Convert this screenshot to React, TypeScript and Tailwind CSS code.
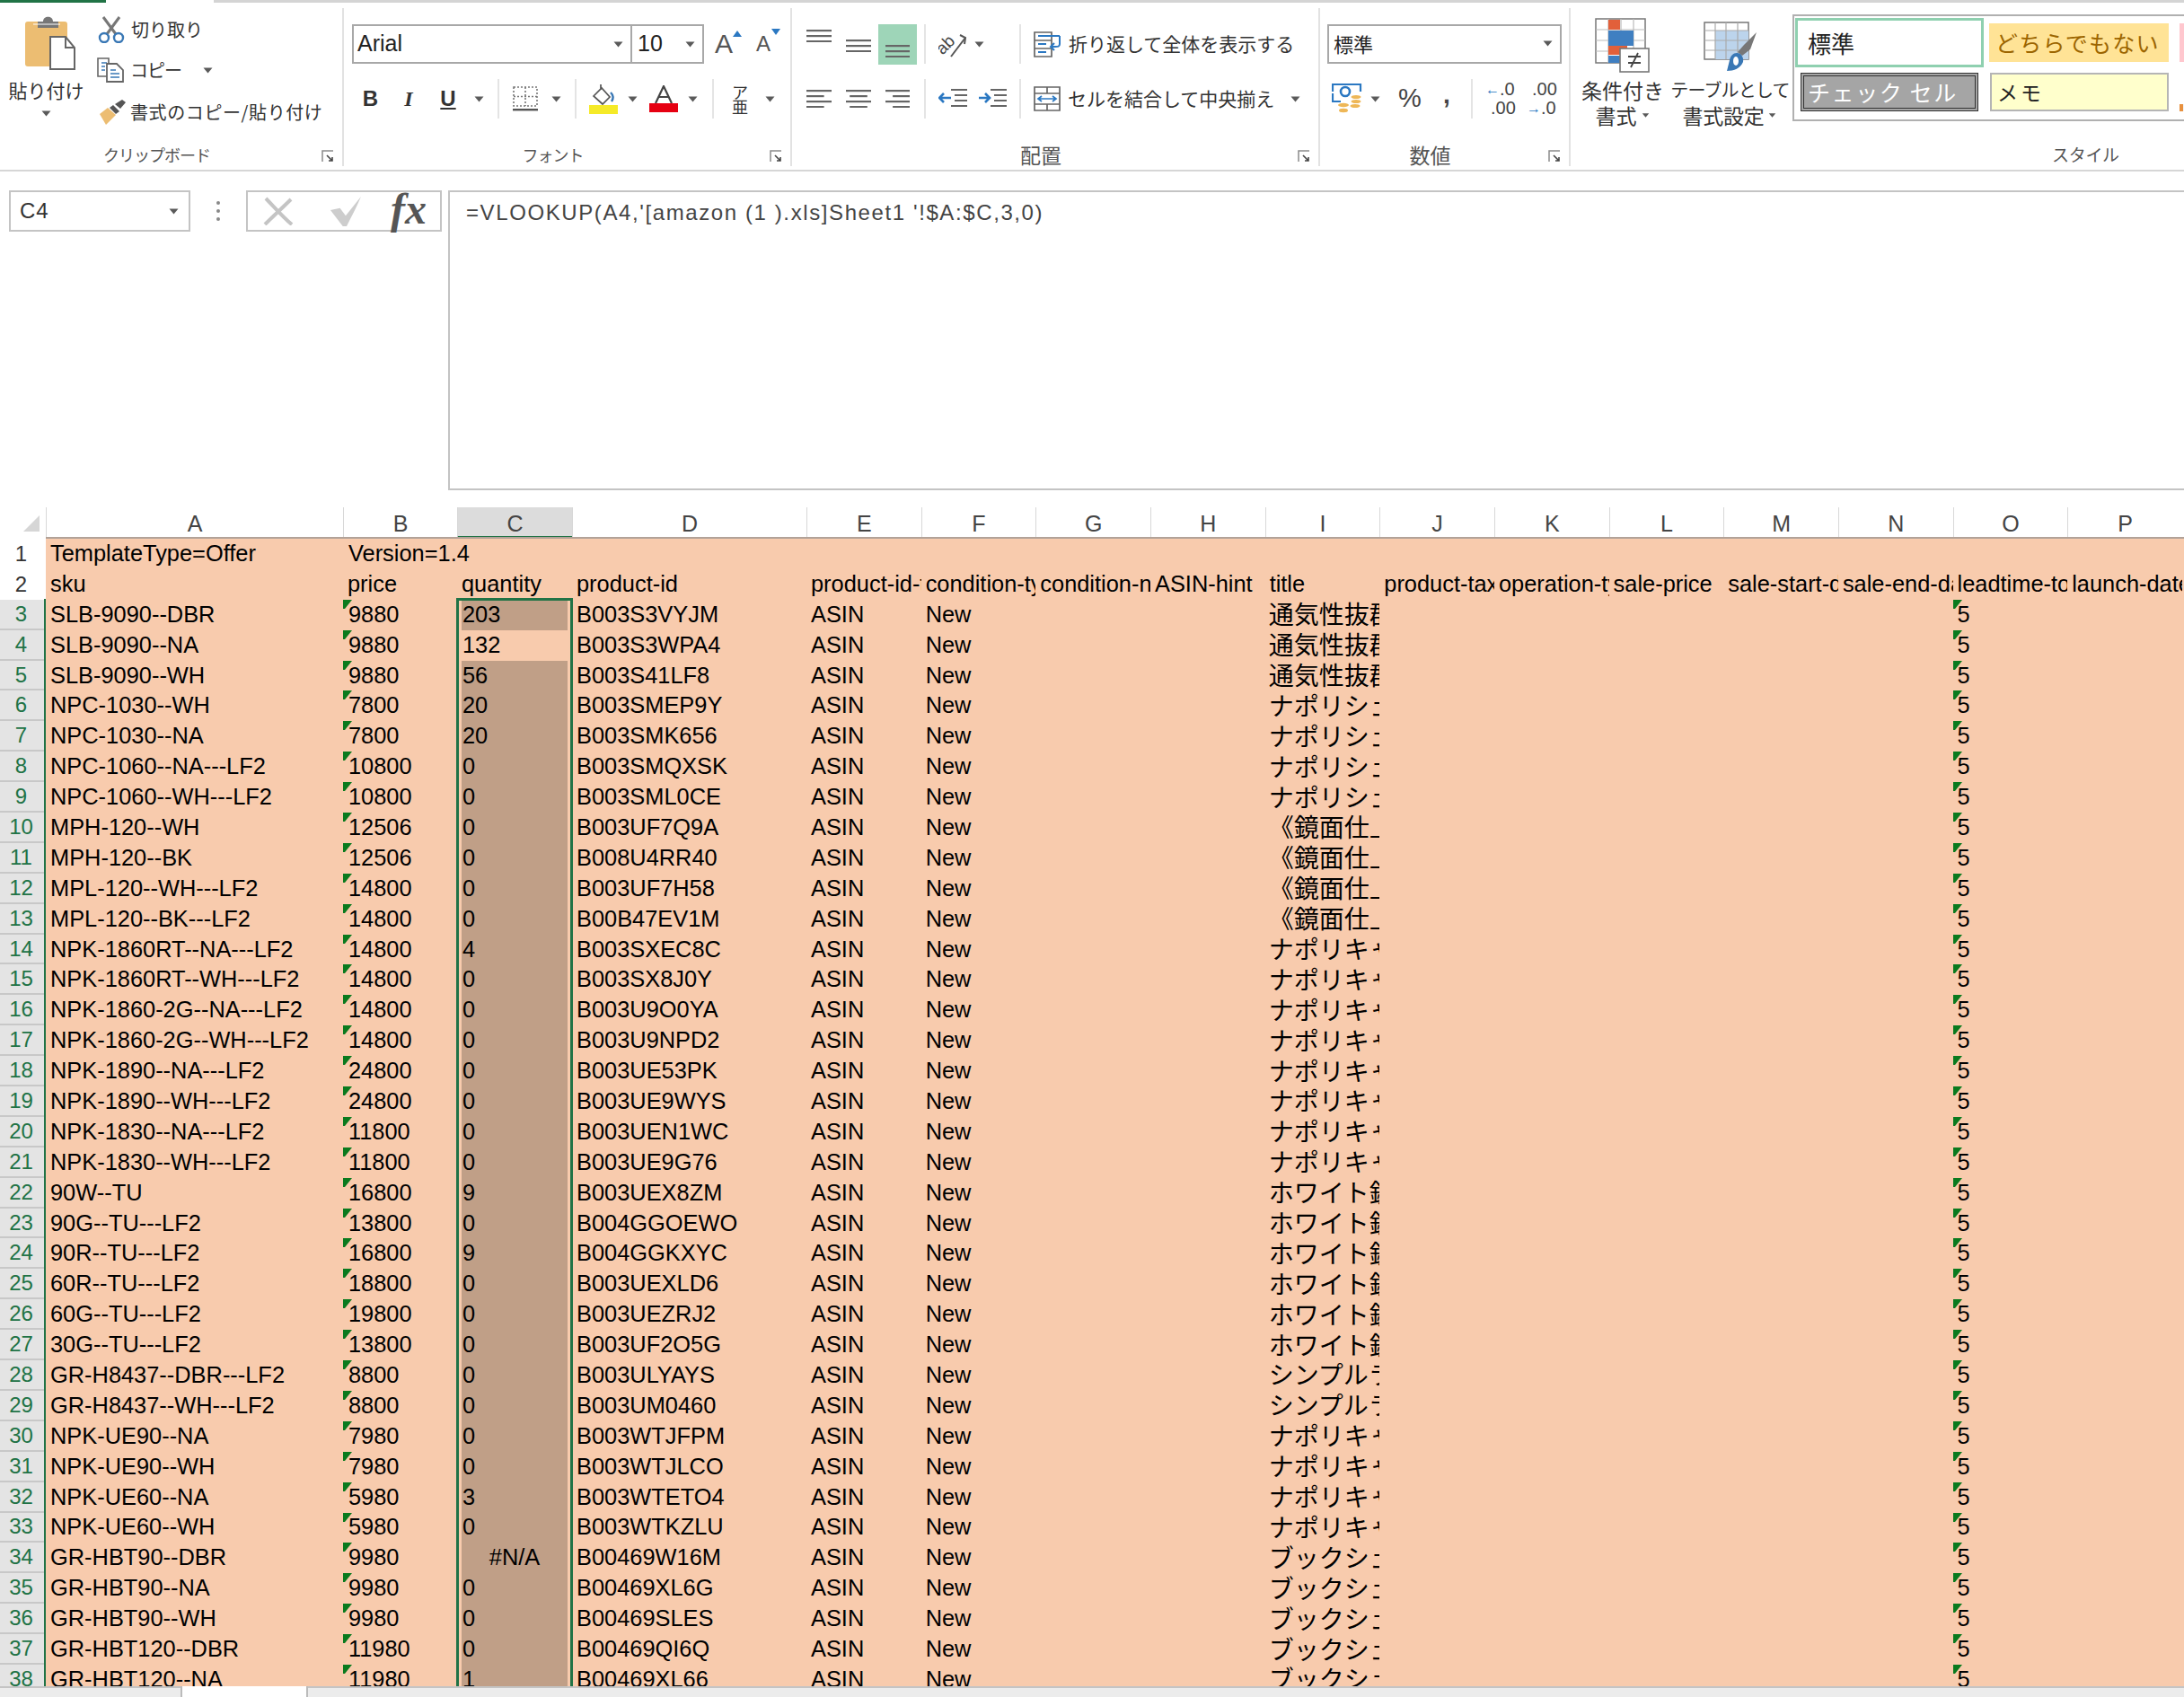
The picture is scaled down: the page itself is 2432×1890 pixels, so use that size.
import React from "react";

const COLS = ["A","B","C","D","E","F","G","H","I","J","K","L","M","N","O","P"];
const TEMPLATE = "grid grid-cols-[51px_331px_127px_128px_261px_repeat(12,127.67px)_1fr]";
const HEAD = ["sku","price","quantity","product-id","product-id-type","condition-type","condition-note","ASIN-hint","title","product-tax-code","operation-type","sale-price","sale-start-date","sale-end-date","leadtime-to-ship","launch-date"];
const T1 = "通気性抜群シート", T2 = "ナポリシェルフ", T3 = "《鏡面仕上げ", T4 = "ナポリキャビネット", T5 = "ホワイト鏡面", T6 = "シンプルラック", T7 = "ブックシェルフ";
const ROWS: [number,string,string,string,string,string][] = [
[3,"SLB-9090--DBR","9880","203","B003S3VYJM",T1],[4,"SLB-9090--NA","9880","132","B003S3WPA4",T1],[5,"SLB-9090--WH","9880","56","B003S41LF8",T1],
[6,"NPC-1030--WH","7800","20","B003SMEP9Y",T2],[7,"NPC-1030--NA","7800","20","B003SMK656",T2],[8,"NPC-1060--NA---LF2","10800","0","B003SMQXSK",T2],
[9,"NPC-1060--WH---LF2","10800","0","B003SML0CE",T2],[10,"MPH-120--WH","12506","0","B003UF7Q9A",T3],[11,"MPH-120--BK","12506","0","B008U4RR40",T3],
[12,"MPL-120--WH---LF2","14800","0","B003UF7H58",T3],[13,"MPL-120--BK---LF2","14800","0","B00B47EV1M",T3],[14,"NPK-1860RT--NA---LF2","14800","4","B003SXEC8C",T4],
[15,"NPK-1860RT--WH---LF2","14800","0","B003SX8J0Y",T4],[16,"NPK-1860-2G--NA---LF2","14800","0","B003U9O0YA",T4],[17,"NPK-1860-2G--WH---LF2","14800","0","B003U9NPD2",T4],
[18,"NPK-1890--NA---LF2","24800","0","B003UE53PK",T4],[19,"NPK-1890--WH---LF2","24800","0","B003UE9WYS",T4],[20,"NPK-1830--NA---LF2","11800","0","B003UEN1WC",T4],
[21,"NPK-1830--WH---LF2","11800","0","B003UE9G76",T4],[22,"90W--TU","16800","9","B003UEX8ZM",T5],[23,"90G--TU---LF2","13800","0","B004GGOEWO",T5],
[24,"90R--TU---LF2","16800","9","B004GGKXYC",T5],[25,"60R--TU---LF2","18800","0","B003UEXLD6",T5],[26,"60G--TU---LF2","19800","0","B003UEZRJ2",T5],
[27,"30G--TU---LF2","13800","0","B003UF2O5G",T5],[28,"GR-H8437--DBR---LF2","8800","0","B003ULYAYS",T6],[29,"GR-H8437--WH---LF2","8800","0","B003UM0460",T6],
[30,"NPK-UE90--NA","7980","0","B003WTJFPM",T4],[31,"NPK-UE90--WH","7980","0","B003WTJLCO",T4],[32,"NPK-UE60--NA","5980","3","B003WTETO4",T4],
[33,"NPK-UE60--WH","5980","0","B003WTKZLU",T4],[34,"GR-HBT90--DBR","9980","#N/A","B00469W16M",T7],[35,"GR-HBT90--NA","9980","0","B00469XL6G",T7],
[36,"GR-HBT90--WH","9980","0","B00469SLES",T7],[37,"GR-HBT120--DBR","11980","0","B00469QI6Q",T7],[38,"GR-HBT120--NA","11980","1","B00469XL66",T7],
];

const CJK = "font-['Noto_Sans_CJK_JP','Noto_Sans',sans-serif]";
const Caret = ({ className = "" }: { className?: string }) => (
  <svg width="11" height="7" viewBox="0 0 11 7" className={`shrink-0 ${className}`}><path d="M0.5 0.5h10L5.5 6.5z" fill="#5a5a5a" /></svg>
);
const Sep = ({ className = "" }: { className?: string }) => <div className={`w-[2px] h-[44px] bg-[#e4e4e4] shrink-0 ${className}`} />;
const GroupSep = () => <div className="w-[2px] h-[176px] mt-[6px] bg-[#e2e2e2] shrink-0" />;
const Launcher = () => (
  <svg width="14" height="14" viewBox="0 0 14 14" className="absolute right-[9px] top-[8px]">
    <path d="M1 13V1h12" fill="none" stroke="#8a8a8a" strokeWidth="1.5" /><path d="M6 6l6 6M12 8v4H8" fill="none" stroke="#444" strokeWidth="1.6" />
  </svg>
);
const GroupLabel = ({ children, className = "" }: { children: string; className?: string }) => (
  <div className={`relative h-[30px] leading-[26px] text-[#555] text-center pr-[32px] ${CJK} ${className}`}>
    {children}<Launcher />
  </div>
);
const Lines = ({ w = 28, kind }: { w?: number; kind: "t" | "m" | "b" | "l" | "c" | "r" }) => {
  const h = ["l", "c", "r"].includes(kind);
  const rows = h ? [1, 7, 13, 19] : [1, 7, 13];
  const len = (i: number) => (h && i % 2 === 1 ? 0.7 : 1);
  return (
    <svg width={w} height={h ? 20 : 14} viewBox={`0 0 ${w} ${h ? 20 : 14}`} className="shrink-0">
      {rows.map((y, i) => {
        const l = w * len(i);
        const x = kind === "c" ? (w - l) / 2 : kind === "r" ? w - l : 0;
        return <rect key={y} x={x} y={y - 1} width={l} height="2.2" fill="#666" />;
      })}
    </svg>
  );
};

const PasteIcon = () => (
  <svg width="58" height="60" viewBox="0 0 58 60" className="shrink-0">
    <rect x="1" y="6" width="47" height="50" rx="3" fill="#ecbd72" />
    <path d="M15 6h6c0-7 11-7 11 0h6v7H15z" fill="#777" />
    <rect x="10" y="8" width="30" height="2" fill="#fff" opacity=".5" />
    <path d="M29 23h17l10 12v24H29z" fill="#fff" stroke="#666" strokeWidth="2" />
    <path d="M46 23v12h10" fill="none" stroke="#666" strokeWidth="2" />
  </svg>
);
const ScissorsIcon = () => (
  <svg width="30" height="30" viewBox="0 0 30 30" className="shrink-0">
    <path d="M6 1l14 19M24 1L10 20" stroke="#777" strokeWidth="3" fill="none" />
    <circle cx="7" cy="24" r="5" fill="none" stroke="#3a78b5" strokeWidth="2.4" />
    <circle cx="23" cy="24" r="5" fill="none" stroke="#3a78b5" strokeWidth="2.4" />
  </svg>
);
const CopyIcon = () => (
  <svg width="30" height="28" viewBox="0 0 30 28" className="shrink-0">
    <path d="M1 1h12v20H1z" fill="#fff" stroke="#666" strokeWidth="1.6" />
    <path d="M5 6h6M5 10h4M5 14h4" stroke="#3a78b5" strokeWidth="1.6" />
    <path d="M11 7h11l7 7v13H11z" fill="#fff" stroke="#666" strokeWidth="1.8" />
    <path d="M15 14h6M15 18h10M15 22h10" stroke="#3a78b5" strokeWidth="1.6" />
  </svg>
);
const BrushIcon = () => (
  <svg width="32" height="28" viewBox="0 0 32 28" className="shrink-0">
    <path d="M2 16l9-7 9 8-11 11z" fill="#ecbd72" />
    <path d="M13 9l7 7 4-3-7-7z" fill="#555" />
    <path d="M19 5l6 5 6-7-4-3z" fill="#555" />
  </svg>
);
const BorderIcon = () => (
  <svg width="28" height="28" viewBox="0 0 28 28" className="shrink-0">
    <path d="M1 1h26v21H1zM14 1v21M1 11.5h26" fill="none" stroke="#777" strokeWidth="1.6" strokeDasharray="2 2" />
    <rect x="0" y="25" width="28" height="2.4" fill="#555" />
  </svg>
);
const FillIcon = () => (
  <svg width="32" height="34" viewBox="0 0 32 34" className="shrink-0">
    <path d="M13 1v6M5 14l9-9 9 10-8 8z" fill="none" stroke="#555" strokeWidth="1.7" />
    <path d="M24 10c3 3 3 7 1 10" fill="none" stroke="#3a78b5" strokeWidth="2.4" />
    <rect x="0" y="24" width="32" height="10" fill="#f5ea28" />
  </svg>
);
const FontColorIcon = () => (
  <svg width="32" height="30" viewBox="0 0 32 30" className="shrink-0">
    <path d="M7 20L16 1l9 19M10.5 13h11" fill="none" stroke="#444" strokeWidth="2.2" />
    <rect x="0" y="20" width="32" height="10" fill="#e60012" />
  </svg>
);
const OrientIcon = () => (
  <svg width="32" height="30" viewBox="0 0 32 30" className="shrink-0">
    <text x="0" y="23" transform="rotate(-45 8 20)" fontFamily="Liberation Sans" fontSize="19" fill="#444">ab</text>
    <path d="M30 8L14 29" fill="none" stroke="#555" strokeWidth="2" />
    <path d="M24 5l6 3-1 7" fill="none" stroke="#555" strokeWidth="2" />
  </svg>
);
const IndentIcon = ({ inc }: { inc?: boolean }) => (
  <svg width="32" height="24" viewBox="0 0 32 24" className="shrink-0">
    <path d="M14 2h18M18 8h14M18 14h14M14 20h18" stroke="#666" strokeWidth="2.2" />
    {inc ? <path d="M1 11h12M8 6l5 5-5 5" fill="none" stroke="#2b78c2" strokeWidth="2.6" /> : <path d="M14 11H1M6 6l-5 5 5 5" fill="none" stroke="#2b78c2" strokeWidth="2.6" />}
  </svg>
);
const WrapIcon = () => (
  <svg width="32" height="29" viewBox="0 0 32 29" className="shrink-0">
    <path d="M1 1h19v27H1zM1 10h19M1 19h19" fill="#fff" stroke="#666" strokeWidth="1.7" />
    <path d="M5 5h24M5 14h9M5 23h9" stroke="#2b78c2" strokeWidth="2" />
    <path d="M29 5v9c0 3-2 3-5 3h-4M23 13l-4 4 4 4" fill="none" stroke="#2b78c2" strokeWidth="2" />
  </svg>
);
const MergeIcon = () => (
  <svg width="30" height="28" viewBox="0 0 30 28" className="shrink-0">
    <path d="M1 1h28v26H1zM1 8h28M1 20h28M15 1v7M15 20v7" fill="#fff" stroke="#666" strokeWidth="1.7" />
    <path d="M5 14h20M9 11l-4 3 4 3M21 11l4 3-4 3" fill="none" stroke="#2b78c2" strokeWidth="1.7" />
  </svg>
);
const MoneyIcon = () => (
  <svg width="34" height="34" viewBox="0 0 34 34" className="shrink-0">
    <path d="M1 9V1h31v8M1 11v9h9" fill="none" stroke="#2b78c2" strokeWidth="2.2" />
    <circle cx="15" cy="9" r="5" fill="none" stroke="#2b78c2" strokeWidth="2.6" />
    <ellipse cx="27" cy="15" rx="5.5" ry="2" fill="#eeb757" /><ellipse cx="27" cy="20" rx="5.5" ry="2" fill="#eeb757" />
    <ellipse cx="26" cy="25" rx="5.5" ry="2" fill="#eeb757" />
    <ellipse cx="13" cy="24" rx="6" ry="2.2" fill="#eeb757" /><ellipse cx="13" cy="30" rx="5" ry="2.2" fill="#eeb757" />
  </svg>
);
const CondIcon = () => (
  <svg width="62" height="62" viewBox="0 0 62 62" className="shrink-0">
    <rect x="1" y="1" width="55" height="49" fill="#fff" stroke="#777" strokeWidth="1.5" />
    <path d="M15 1v49M29 1v49M43 1v49M1 13h55M1 25h55M1 37h55" stroke="#bbb" strokeWidth="1.2" />
    <rect x="15" y="2" width="13" height="11" fill="#e2603a" />
    <rect x="15" y="14" width="28" height="17" fill="#3f7fc1" />
    <rect x="15" y="31" width="21" height="10" fill="#e2603a" />
    <rect x="15" y="42" width="13" height="8" fill="#3f7fc1" />
    <rect x="28" y="34" width="32" height="26" fill="#fff" stroke="#777" strokeWidth="1.6" />
    <path d="M37 43h14M37 50h14M40 55l8-16" stroke="#444" strokeWidth="1.8" fill="none" />
  </svg>
);
const TableIcon = () => (
  <svg width="60" height="58" viewBox="0 0 60 58" className="shrink-0">
    <rect x="1" y="1" width="49" height="41" fill="#fff" stroke="#777" strokeWidth="1.5" />
    <rect x="13" y="10" width="37" height="32" fill="#bcd4ec" />
    <path d="M13 1v41M25 1v41M38 1v41M1 10h49M1 21h49M1 32h49" stroke="#aaa" strokeWidth="1.2" />
    <path d="M59 12L45 26l-7 8 5 4 9-7z" fill="#777" />
    <path d="M37 35c-4 0-7 3-8 8l-3 12c8 0 15-3 18-10 1-5-2-10-7-10z" fill="#3a78b5" />
    <ellipse cx="36" cy="44" rx="3" ry="5" fill="#fff" />
  </svg>
);
const CrossIcon = () => (
  <svg width="34" height="32" viewBox="0 0 34 32" className="shrink-0"><path d="M3 2c8 8 20 22 29 29M31 3C22 12 12 21 2 31" fill="none" stroke="#c4c4c4" strokeWidth="4" /></svg>
);
const CheckIcon = () => (
  <svg width="40" height="34" viewBox="0 0 36 32" className="shrink-0"><path d="M1 15l10-2 6 8L33 1c-5 12-10 21-15 31h-4z" fill="#cdcdcd" /></svg>
);

function Ribbon() {
  return (
    <div className="flex h-[188px] border-b-[2px] border-[#d6d6d6] box-border">
      {/* clipboard */}
      <div className="w-[381px] shrink-0 flex flex-col">
        <div className="h-[156px] flex">
          <div className="w-[105px] flex flex-col items-center pt-[15px] pr-[2px]">
            <div className="pl-[8px]"><PasteIcon /></div>
            <div className={`text-[21px] leading-[24px] text-[#333] mt-[10px] ${CJK}`}>貼り付け</div>
            <Caret className="mt-[11px]" />
          </div>
          <div className="flex flex-col text-[20px] text-[#333]">
            <div className={`h-[30px] mt-[15px] flex items-center ${CJK}`}><div className="ml-[4px]"><ScissorsIcon /></div><span className="ml-[7px]">切り取り</span></div>
            <div className={`h-[30px] mt-[15px] flex items-center ${CJK}`}><div className="ml-[3px]"><CopyIcon /></div><span className="ml-[7px] tracking-[-1px]">コピー</span><Caret className="ml-[24px]" /></div>
            <div className={`h-[30px] mt-[17px] flex items-center ${CJK}`}><div className="ml-[4px]"><BrushIcon /></div><span className="ml-[4px] tracking-[0.6px]">書式のコピー/貼り付け</span></div>
          </div>
        </div>
        <GroupLabel className="text-[18px] tracking-[-1px]">クリップボード</GroupLabel>
      </div>
      <GroupSep />
      {/* font */}
      <div className="w-[497px] shrink-0 flex flex-col">
        <div className="h-[156px] pl-[9px] pt-[24px]">
          <div className="flex items-center">
            <div className="w-[312px] h-[44px] border-[2px] border-[#a8a8a8] flex items-center justify-between pl-[4px] pr-[8px] text-[25px] text-[#222] font-['Liberation_Sans',sans-serif]">Arial<Caret /></div>
            <div className="w-[80px] h-[44px] border-[2px] border-l-0 border-[#a8a8a8] flex items-center justify-between pl-[6px] pr-[8px] text-[25px] text-[#222] font-['Liberation_Sans',sans-serif]">10<Caret /></div>
            <div className="relative ml-[12px] w-[24px] text-[30px] leading-[30px] text-[#555] font-['Liberation_Sans',sans-serif]">A<svg width="10" height="7" viewBox="0 0 10 7" className="absolute -right-[6px] top-0"><path d="M0 7h10L5 0z" fill="#2b78c2" /></svg></div>
            <div className="relative ml-[22px] w-[20px] text-[24px] leading-[30px] text-[#555] font-['Liberation_Sans',sans-serif]">A<svg width="10" height="7" viewBox="0 0 10 7" className="absolute -right-[7px] -top-[2px]"><path d="M0 0h10L5 7z" fill="#2b78c2" /></svg></div>
          </div>
          <div className="flex items-center h-[44px] mt-[17px] font-['Liberation_Sans',sans-serif] text-[#333]">
            <span className="w-[41px] text-center text-[24px] font-bold">B</span>
            <span className="w-[44px] text-center text-[24px] italic font-['Liberation_Serif',serif] font-bold">I</span>
            <span className="w-[44px] text-center text-[24px] font-bold underline">U</span>
            <span className="w-[24px] flex justify-center"><Caret /></span>
            <span className="w-[20px] flex justify-center"><Sep /></span>
            <span className="w-[40px] flex justify-center"><BorderIcon /></span>
            <span className="w-[28px] flex justify-center"><Caret /></span>
            <span className="w-[16px] flex justify-center"><Sep /></span>
            <span className="w-[46px] flex justify-center"><FillIcon /></span>
            <span className="w-[18px] flex justify-center"><Caret /></span>
            <span className="w-[52px] flex justify-center"><FontColorIcon /></span>
            <span className="w-[12px] flex justify-center"><Caret /></span>
            <span className="w-[34px] flex justify-center"><Sep /></span>
            <span className={`w-[26px] flex flex-col items-center text-[18px] leading-[16px] ${CJK}`}><span>ア</span><span>亜</span></span>
            <span className="w-[40px] flex justify-center"><Caret /></span>
          </div>
        </div>
        <GroupLabel className="text-[18px] tracking-[-1px]">フォント</GroupLabel>
      </div>
      <GroupSep />
      {/* alignment */}
      <div className="w-[586px] shrink-0 flex flex-col">
        <div className="h-[156px] pt-[24px]">
          <div className="flex items-center h-[44px]">
            <div className="ml-[16px] w-[28px] self-start mt-[6px]"><Lines kind="t" /></div>
            <div className="ml-[16px] w-[28px] mt-[4px]"><Lines kind="m" /></div>
            <div className="ml-[8px] w-[43px] h-[45px] bg-[#9ed5b8] flex items-end justify-center pb-[8px]"><Lines w={27} kind="b" /></div>
            <Sep className="ml-[8px]" />
            <div className="ml-[14px]"><OrientIcon /></div>
            <Caret className="ml-[8px]" />
            <Sep className="ml-[39px]" />
            <div className="ml-[14px]"><WrapIcon /></div>
            <span className={`ml-[7px] text-[21px] text-[#333] ${CJK}`}>折り返して全体を表示する</span>
          </div>
          <div className="flex items-center h-[44px] mt-[17px]">
            <div className="ml-[16px]"><Lines kind="l" /></div>
            <div className="ml-[16px]"><Lines kind="c" /></div>
            <div className="ml-[16px]"><Lines w={27} kind="r" /></div>
            <Sep className="ml-[16px]" />
            <div className="ml-[14px]"><IndentIcon /></div>
            <div className="ml-[12px]"><IndentIcon inc /></div>
            <Sep className="ml-[14px]" />
            <div className="ml-[14px]"><MergeIcon /></div>
            <span className={`ml-[8px] text-[21px] text-[#333] ${CJK}`}>セルを結合して中央揃え</span>
            <Caret className="ml-[18px]" />
          </div>
        </div>
        <GroupLabel className="text-[23px]">配置</GroupLabel>
      </div>
      <GroupSep />
      {/* number */}
      <div className="w-[277px] shrink-0 flex flex-col">
        <div className="h-[156px] pt-[24px] pl-[8px]">
          <div className={`w-[261px] h-[44px] border-[2px] border-[#a8a8a8] flex items-center justify-between pl-[5px] pr-[8px] pb-[2px] text-[22px] text-[#222] ${CJK}`}>標準<Caret /></div>
          <div className="flex items-center h-[44px] mt-[17px]">
            <div className="ml-[5px]"><MoneyIcon /></div>
            <Caret className="ml-[9px]" />
            <span className="ml-[16px] w-[34px] text-center text-[29px] text-[#444] font-['Liberation_Sans',sans-serif]">%</span>
            <span className="ml-[12px] w-[24px] text-center text-[28px] font-bold text-[#444] font-['Liberation_Sans',sans-serif] -mt-[8px]">,</span>
            <Sep className="ml-[15px]" />
            <div className="ml-[14px] w-[36px] flex flex-col text-[20px] leading-[21px] text-[#444] font-['Liberation_Sans',sans-serif]">
              <span className="flex items-center"><span className="text-[#2b78c2] font-bold text-[16px]">←</span>.0</span><span className="pl-[6px]">.00</span>
            </div>
            <div className="ml-[10px] w-[36px] flex flex-col text-[20px] leading-[21px] text-[#444] font-['Liberation_Sans',sans-serif]">
              <span className="pl-[6px]">.00</span><span className="flex items-center"><span className="text-[#2b78c2] font-bold text-[16px]">→</span>.0</span>
            </div>
          </div>
        </div>
        <GroupLabel className="text-[23px]">数値</GroupLabel>
      </div>
      <GroupSep />
      {/* styles */}
      <div className="flex-1 min-w-0 flex flex-col overflow-hidden">
        <div className="h-[156px] flex">
          <div className="w-[108px] shrink-0 flex flex-col items-center pt-[17px] pl-[8px]">
            <CondIcon />
            <div className={`text-[23px] leading-[26px] text-[#333] mt-[5px] text-center whitespace-nowrap ${CJK}`}>条件付き</div>
            <div className={`text-[23px] leading-[30px] text-[#333] flex items-center gap-[4px] ${CJK}`}>書式<Caret className="scale-75" /></div>
          </div>
          <div className="w-[139px] shrink-0 flex flex-col items-center pt-[21px]">
            <TableIcon />
            <div className={`text-[20px] leading-[26px] tracking-[-0.8px] whitespace-nowrap text-[#333] mt-[5px] text-center ${CJK}`}>テーブルとして</div>
            <div className={`text-[23px] leading-[30px] tracking-[-0.3px] text-[#333] flex items-center gap-[4px] whitespace-nowrap ${CJK}`}>書式設定<Caret className="scale-75" /></div>
          </div>
          <div className="w-[460px] shrink-0 h-[119px] mt-[13px] border-[2px] border-r-0 border-[#b0b0b0] bg-white pl-[1px] pt-[2px] flex flex-col gap-[6px]">
            <div className="flex items-center gap-[6px]">
              <div className={`w-[210px] h-[55px] border-[3px] border-[#8fd0b0] flex items-center pl-[11px] text-[26px] text-[#222] shrink-0 ${CJK}`}>標準</div>
              <div className={`w-[200px] h-[43px] bg-[#ffe396] flex items-center pl-[7px] text-[25px] tracking-[1.2px] text-[#9c6500] shrink-0 whitespace-nowrap ${CJK}`}>どちらでもない</div>
              <div className="ml-[6px] w-[40px] h-[43px] bg-[#ffc7ce] shrink-0" />
            </div>
            <div className="flex items-center gap-[13px] pl-[6px]">
              <div className={`w-[198px] h-[43px] bg-[#a5a5a5] border-[4px] border-double border-[#333] flex items-center pl-[4px] text-[25px] tracking-[1.6px] text-white shrink-0 whitespace-nowrap ${CJK}`}>チェック セル</div>
              <div className={`w-[199px] h-[43px] bg-[#ffffcc] border-[2px] border-[#b5b5b5] flex items-center pl-[6px] text-[23px] tracking-[3px] text-[#222] shrink-0 ${CJK}`}>メモ</div>
              <div className="ml-[-1px] mt-[34px] w-[40px] h-[8px] bg-[#f4f4f4] border-l-[4px] border-[#e8913f] shrink-0" />
            </div>
          </div>
        </div>
        <GroupLabel className="text-[19px] tracking-[-0.3px] !text-left pl-[536px] !pr-0 [&>svg]:hidden">スタイル</GroupLabel>
      </div>
    </div>
  );
}

function FormulaBar() {
  return (
    <div className="h-[355px] flex pt-[21px] pl-[10px] font-['Liberation_Sans',sans-serif]">
      <div className="w-[202px] h-[46px] border-[2px] border-[#c4c4c4] flex items-center justify-between pl-[10px] pr-[11px] text-[24px] tracking-[1px] text-[#333] shrink-0">C4<Caret /></div>
      <div className="w-[62px] h-[46px] flex flex-col items-center justify-center gap-[5px] shrink-0">
        <span className="w-[4px] h-[4px] bg-[#888] rounded-full" /><span className="w-[4px] h-[4px] bg-[#888] rounded-full" /><span className="w-[4px] h-[4px] bg-[#888] rounded-full" />
      </div>
      <div className="w-[218px] h-[46px] border-[2px] border-[#c4c4c4] flex items-center pl-[17px] shrink-0">
        <CrossIcon />
        <div className="ml-[39px]"><CheckIcon /></div>
        <span className="ml-[29px] text-[48px] leading-[44px] italic font-bold font-['Liberation_Serif',serif] text-[#555] -mt-[4px]">fx</span>
      </div>
      <div className="ml-[7px] flex-1 h-[334px] border-l-[2px] border-t-[2px] border-b-[2px] border-[#c4c4c4] pl-[18px] pt-[5px] text-[24px] tracking-[1.6px] text-[#444] whitespace-nowrap">
        =VLOOKUP(A4,'[amazon (1 ).xls]Sheet1 '!$A:$C,3,0)
      </div>
    </div>
  );
}

const Tri = () => (
  <svg width="10" height="10" viewBox="0 0 10 10" className="absolute left-0 top-0"><path d="M0 0h10L2 10H0z" fill="#0a7a1e" /></svg>
);

function Grid() {
  const text = "font-['Liberation_Sans','Noto_Sans_CJK_JP',sans-serif] text-[25.4px] leading-[30px] text-black";
  const Cell = ({ children, className = "" }: { children?: React.ReactNode; className?: string }) => (
    <div className={`relative h-full overflow-hidden whitespace-nowrap flex items-center pl-[5px] pb-[2px] ${className}`}>{children}</div>
  );
  return (
    <div className="relative">
      {/* headers */}
      <div className={`${TEMPLATE} h-[35px] font-['Liberation_Sans',sans-serif] text-[25px] leading-[30px] text-[#444]`}>
        <div className="relative">
          <svg width="20" height="20" viewBox="0 0 20 20" className="absolute left-[26px] top-[9px]"><path d="M18 0v18H0z" fill="#d6d6d6" /></svg>
        </div>
        {COLS.map((c) => (
          <div key={c} className={`flex items-center justify-center border-l-[1px] border-[#d8d8d8] h-[33px] pt-[3px] ${c === "C" ? "bg-[#dcdcdc] !h-[35px] border-b-[3px] border-b-[#217346]" : ""}`}>{c}</div>
        ))}
        <div />
      </div>
      <div className="absolute left-[51px] right-0 top-[33px] h-[2px] bg-[#b2a298]" />
      <div className="relative h-[1278px] overflow-hidden">
        <div className={`${TEMPLATE} h-[33.9px] ${text}`}>
          <div className="flex items-center justify-center pr-[4px] text-[24px] text-[#333]">1</div>
          <Cell className="bg-[#f8cbad] overflow-visible z-10">TemplateType=Offer</Cell>
          <Cell className="bg-[#f8cbad] overflow-visible pl-[6px]">Version=1.4</Cell>
          {COLS.slice(2).map((c) => <div key={c} className="bg-[#f8cbad]" />)}
          <div className="bg-[#f8cbad]" />
        </div>
        <div className={`${TEMPLATE} h-[33.9px] ${text}`}>
          <div className="flex items-center justify-center pr-[4px] text-[24px] text-[#333]">2</div>
          {HEAD.map((h) => <Cell key={h} className="bg-[#f8cbad]">{h}</Cell>)}
          <div className="bg-[#f8cbad]" />
        </div>
        {ROWS.map(([n, sku, price, qty, id, title]) => (
          <div key={n} className={`${TEMPLATE} h-[33.9px] ${text}`}>
            <div className="flex items-center justify-center pr-[4px] text-[24px] text-[#217346] bg-[#e4e4e4] border-b-[2px] border-[#c8c8c8]">{n}</div>
            <Cell className="bg-[#f8cbad]">{sku}</Cell>
            <Cell className="bg-[#f8cbad] !pl-[6px]"><Tri />{price}</Cell>
            <div className="bg-[#f8cbad] px-[5px] h-full">
              <div className={`h-full flex items-center pb-[2px] ${n === 4 ? "" : "bg-[#c09f87]"} ${qty === "#N/A" ? "justify-center" : "pl-[1px]"}`}>{qty}</div>
            </div>
            <Cell className="bg-[#f8cbad]">{id}</Cell>
            <Cell className="bg-[#f8cbad]">ASIN</Cell>
            <Cell className="bg-[#f8cbad]">New</Cell>
            <Cell className="bg-[#f8cbad]" />
            <Cell className="bg-[#f8cbad]" />
            <Cell className="bg-[#f8cbad] text-[28px] !pl-[4px] !pb-[3px] font-['Noto_Sans_CJK_JP',sans-serif]">{title}</Cell>
            {["j","k","l","m","n"].map((k) => <Cell key={k} className="bg-[#f8cbad]" />)}
            <Cell className="bg-[#f8cbad]"><Tri />5</Cell>
            <Cell className="bg-[#f8cbad]" />
            <div className="bg-[#f8cbad]" />
          </div>
        ))}
        {/* selection box over the cells */}
        <div className="absolute left-[508px] top-[66px] w-[130px] h-[1300px] border-[3px] border-[#217346] pointer-events-none" />
        <div className="absolute left-[49px] top-[67px] w-[2px] h-[1300px] bg-[#217346] pointer-events-none" />
      </div>
    </div>
  );
}

export default function App() {
  return (
    <div className="w-[2432px] h-[1890px] overflow-hidden bg-white">
      <div className="h-[3px] flex bg-white">
        <div className="w-[118px] bg-[#217346]" />
        <div className="w-[120px]" />
        <div className="flex-1 bg-[#d4d4d4]" />
      </div>
      <Ribbon />
      <FormulaBar />
      <div className="h-[19px]" />
      <Grid />
      <div className="h-[12px] bg-[#ececec] border-t-[2px] border-[#c4c4c4] flex">
        <div className="ml-[201px] w-[142px] h-[12px] -mt-[2px] bg-white border-l-[2px] border-r-[2px] border-[#bbb]" />
      </div>
    </div>
  );
}
